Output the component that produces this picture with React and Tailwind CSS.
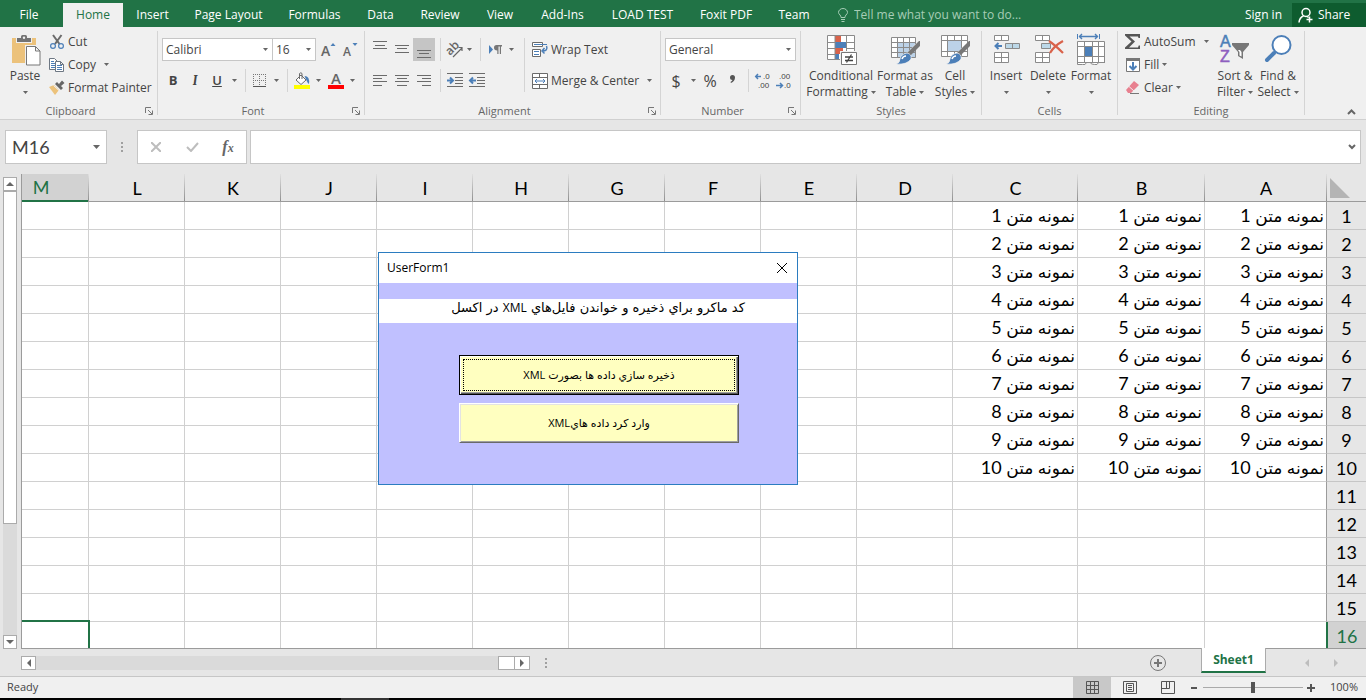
import React, { useState } from 'react'
import clsx from 'clsx'

const tabs = [
  { name: 'File', width: 'w-[58px] mr-[5px]' },
  { name: 'Home', width: 'w-[60px]' },
  { name: 'Insert', width: 'w-[59px]' },
  { name: 'Page Layout', width: 'w-[93px]' },
  { name: 'Formulas', width: 'w-[79px]' },
  { name: 'Data', width: 'w-[53px]' },
  { name: 'Review', width: 'w-[66px]' },
  { name: 'View', width: 'w-[54px]' },
  { name: 'Add-Ins', width: 'w-[71px]' },
  { name: 'LOAD TEST', width: 'w-[89px]' },
  { name: 'Foxit PDF', width: 'w-[78px]' },
  { name: 'Team', width: 'w-[58px]' }
]

const columns = [
  { name: 'A', width: 'w-[122px]' },
  { name: 'B', width: 'w-[127px]' },
  { name: 'C', width: 'w-[125px]' },
  ...['D', 'E', 'F', 'G', 'H', 'I', 'J', 'K', 'L', 'M'].map((name) => ({ name, width: 'w-[96px]' }))
]

const rows = Array.from({ length: 16 }, (_, i) => i + 1)

const Caret = ({ className }) => (
  <svg viewBox="0 0 5 3" className={clsx('h-[3px] w-[5px] shrink-0 fill-[#666]', className)} aria-hidden="true">
    <path d="M0 0h5L2.500 3z" />
  </svg>
)

const CaretButton = ({ label }) => (
  <button type="button" aria-label={label} className="flex h-full w-3 shrink-0 items-center justify-center">
    <Caret />
  </button>
)

const Divider = () => <div className="mr-[6px] ml-[5px] h-full w-px shrink-0 bg-[#d4d4d4]" />

const IconButton = ({ label, active, className, children }) => (
  <button
    type="button"
    aria-label={label}
    className={clsx('flex h-full shrink-0 items-center justify-center', active && 'bg-[#c5c5c5]', className || 'w-[22px]')}
  >
    {children}
  </button>
)

const SmallButton = ({ icon, label, caret, wide }) => (
  <button type="button" className="flex h-[23px] items-center whitespace-nowrap">
    {icon}
    <span className="ml-[3px]">{label}</span>
    {caret && <Caret className={wide ? 'ml-2' : 'ml-[3px]'} />}
  </button>
)

const BigButton = ({ icon, first, second, className }) => (
  <button type="button" className={clsx('flex shrink-0 flex-col items-center pt-2 leading-4 whitespace-nowrap', className)}>
    {icon}
    <span className="mt-px">{first}</span>
    <span className="flex h-4 items-center gap-[3px]">
      {second}
      <Caret />
    </span>
  </button>
)

const Combo = ({ label, value, className }) => (
  <div className={clsx('relative h-full shrink-0', className)}>
    <select
      aria-label={label}
      defaultValue={value}
      className="h-full w-full appearance-none border border-[#c6c6c6] bg-white pl-[3px] text-[#444] outline-none"
    >
      <option>{value}</option>
    </select>
    <Caret className="pointer-events-none absolute top-[10px] right-[5px]" />
  </div>
)

const Group = ({ title, launcher, className, children }) => (
  <section className={clsx('flex shrink-0 flex-col', className)}>
    <div className="flex h-[76px]">{children}</div>
    <div className="flex h-4 items-center text-[11px] text-[#666]">
      <span className="flex-1 text-center">{title}</span>
      {launcher && (
        <button type="button" aria-label={`${title} settings`} className="flex w-4 items-center justify-center">
          <svg viewBox="0 0 8 8" className="h-2 w-2 fill-none stroke-[#777]">
            <path d="M.5 6V.5H6M3 3l4 4M7.500 3.500v4h-4" />
          </svg>
        </button>
      )}
    </div>
  </section>
)

const GroupLine = () => <div className="my-1 w-px shrink-0 bg-[#d4d4d4]" />

/* Icons */

const Icon = ({ size = 'h-4 w-4', box = '0 0 16 16', children }) => (
  <svg viewBox={box} className={clsx('shrink-0 overflow-visible fill-none', size)} aria-hidden="true">
    {children}
  </svg>
)

const PasteIcon = () => (
  <Icon size="h-8 w-8" box="-1 0 32 32">
    <path fill="#ecc27b" d="M2 3h24v25H2z" />
    <path fill="#f0f0f0" d="M6 2h16v6H6z" />
    <path fill="#737373" d="M7 3h4V1.500Q11 0 12.500 0h3Q17 0 17 1.500V3h4v4H7z" />
    <circle cx="14" cy="2.800" r="1.200" fill="#f0f0f0" />
    <path fill="#fff" stroke="#f0f0f0" strokeWidth="3" d="M16.500 11.500h9l4.500 4.500v14H16.500z" />
    <path fill="#fff" stroke="#777" d="M16.500 11.500h9l4.500 4.500v14H16.500zM25.500 11.500V16H30" />
  </Icon>
)

const CutIcon = () => (
  <Icon>
    <path stroke="#6b6b6b" strokeWidth="2" d="M4 1l6.500 9M12.500 1L6 10" />
    <circle cx="4" cy="12" r="2.400" stroke="#4c7fb8" strokeWidth="1.200" />
    <circle cx="12" cy="12" r="2.400" stroke="#4c7fb8" strokeWidth="1.200" />
  </Icon>
)

const CopyIcon = () => (
  <Icon>
    <path fill="#fff" stroke="#6d7783" d="M.5 1.500h5l3 3v8h-8z" />
    <path stroke="#4c7fb8" d="M2 4.500h3M2 6.500h4M2 8.500h4M2 10.500h4" />
    <path fill="#fff" stroke="#6d7783" d="M6.500 4.500h5l3 3v7h-8zM11.500 4.500v3h3" />
    <path stroke="#4c7fb8" d="M8 8.500h5M8 10.500h5M8 12.500h5" />
  </Icon>
)

const PainterIcon = () => (
  <Icon>
    <path fill="#ecc27b" d="M0 7l5-2 5 5-4 5z" />
    <path stroke="#f0f0f0" d="M4.500 5.500l5.500 5" />
    <path fill="#666" d="M6 4l2-2 6 6-2 2zM10 4l3-3.500 2.500 2.500L12 6z" />
  </Icon>
)

const FontSizeIcon = ({ grow }) => (
  <Icon>
    <text x="0" y="14" fontSize={grow ? 14 : 12} fontFamily="Open Sans, sans-serif" fontWeight="600" fill="#666">A</text>
    <path fill="#4c7fb8" d={grow ? 'M9.500 4L12 1l2.500 3z' : 'M9.500 1h5L12 4z'} />
  </Icon>
)

const BordersIcon = () => (
  <Icon>
    <path stroke="#777" strokeDasharray="1 1" d="M1 1.500h13M1 7.500h13M1.500 1v12M7.500 1v12M13.500 1v12" />
    <path stroke="#555" d="M1 13.500h13" />
  </Icon>
)

const FillIcon = () => (
  <Icon>
    <path fill="#fff" stroke="#6b6b6b" d="M2 7l5-5 5 5-5 4.500z" />
    <path stroke="#6b6b6b" d="M5.500 6V.5Q7-1 8 .5V6" />
    <path fill="#4c7fb8" d="M10.500 3q5.500 0 4.500 8-1.500-1-2.500-3.500z" />
    <path fill="#ffff00" d="M0 12h16v4H0z" />
  </Icon>
)

const FontColorIcon = () => (
  <Icon>
    <text x="3" y="11" fontSize="15" fontFamily="Open Sans, sans-serif" fontWeight="600" fill="#666">A</text>
    <path fill="#ff0000" d="M0 12h16v4H0z" />
  </Icon>
)

const LinesIcon = ({ d }) => (
  <Icon>
    <path stroke="#6b6b6b" d={d} />
  </Icon>
)

const OrientationIcon = () => (
  <Icon>
    <text x="0" y="11" fontSize="12" fontFamily="Open Sans, sans-serif" fontWeight="600" fill="#666" transform="rotate(-45 5 9)">ab</text>
    <path stroke="#666" strokeWidth="1.200" d="M6 15l9-9M11.500 5.500H15V9" />
  </Icon>
)

const DirectionIcon = () => (
  <Icon>
    <path fill="#4c7fb8" d="M2 3l4 4.500L2 12z" />
    <path fill="#777" d="M15 3v1.500h-1V12h-1.200V4.500h-1.300V12h-1.200V8.500Q7 8.500 7 5.800T9.500 3z" />
  </Icon>
)

const IndentIcon = ({ arrow }) => (
  <Icon>
    <path stroke="#6b6b6b" d="M0 .5h16M8 4.500h8M8 7.500h8M8 10.500h8M0 13.500h16" />
    <path stroke="#4c7fb8" strokeWidth="2" d={arrow} />
  </Icon>
)

const WrapIcon = () => (
  <Icon>
    <path fill="#fff" stroke="#6b6b6b" d="M.5.5h10v4H.5zM.5 7.500h8v7h-8z" />
    <path stroke="#4c7fb8" d="M2 2.500h13M2 9.500h5M2 12.500h5" />
    <path stroke="#4c7fb8" strokeWidth="1.500" d="M14.500 4q2 5-4.500 5M12.500 6L10 9l2.500 2.500" />
  </Icon>
)

const MergeIcon = () => (
  <Icon>
    <path fill="#fff" stroke="#6b6b6b" d="M.5.5h15v15H.5zM.5 4.500h15M.5 11.500h15M7.500.5v4M7.500 11.500v4" />
    <path stroke="#4c7fb8" d="M3 8h10M5 6L3 8l2 2M11 6l2 2-2 2" />
  </Icon>
)

const DecimalIcon = ({ more }) => (
  <Icon>
    <g fontSize="8" fontFamily="Liberation Sans, sans-serif" fill="#444">
      <text x={more ? 8 : 3} y="6">{more ? '.0' : '.00'}</text>
      <text x={more ? 3 : 8} y="15">{more ? '.00' : '.0'}</text>
    </g>
    <path stroke="#4c7fb8" strokeWidth="1.500" d={more ? 'M6 3.500H1M3 1L.7 3.500 3 6' : 'M0 12.500h6M4 10l2.500 2.500L4 15'} />
  </Icon>
)

const ConditionalIcon = () => (
  <Icon size="h-8 w-8" box="0 0 32 32">
    <path fill="#fff" d="M2.500.5h27v24h-27z" />
    <path fill="#d9624a" d="M10 0h6v7h-6zM10 13h8v6h-8z" />
    <path fill="#4c7fb8" d="M10 7h11v6H10zM10 19h4v6h-4z" />
    <path stroke="#8a8a8a" d="M2.500.5h27v24h-27zM2 7.500h8M21 7.500h9M2 13.500h8M21 13.500h9M2 19.500h8M10 0v25M21.500 0v25" />
    <path fill="#fff" stroke="#f0f0f0" strokeWidth="3" d="M16.500 17.500h15v12h-15z" />
    <path fill="#fff" stroke="#777" d="M16.500 17.500h15v12h-15z" />
    <path stroke="#444" strokeWidth="1.300" d="M20 22h8M20 25.500h8M26.500 19.500l-5 8" />
  </Icon>
)

const BrushShape = () => (
  <>
    <path stroke="#f0f0f0" strokeWidth="4" d="M28 10L17 22" />
    <path fill="#777" d="M31 6v5L21 21l-3-3L30 6z" />
    <path fill="#4c7fb8" stroke="#f0f0f0" strokeWidth=".7" d="M18 18q5 1 4 6-4 6-15 5 4-1 4-5 1-5 7-6z" />
    <path stroke="#fff" strokeWidth="1.500" d="M13 24q1-3 4-3" />
  </>
)

const FormatTableIcon = () => (
  <Icon size="h-8 w-8" box="0 0 32 32">
    <path fill="#fff" d="M2.500 2.500h24v20h-24z" />
    <path fill="#bcd2e8" d="M9 8h18v15H9z" />
    <path stroke="#8a8a8a" d="M2.500 2.500h24v20h-24zM2 7.500h25M2 12.500h25M2 17.500h25M8.500 2v20M14.500 2v20M20.500 2v20" />
    <BrushShape />
  </Icon>
)

const CellStylesIcon = () => (
  <Icon size="h-8 w-8" box="0 0 32 32">
    <path fill="#fff" stroke="#8a8a8a" d="M2.500.5h26v21h-26zM2 5.500h27M2 16.500h27M8.500 0v22M22.500 0v22M15.500 0v5M15.500 17v5" />
    <path fill="#bcd2e8" d="M9 6h13v10H9z" />
    <BrushShape />
  </Icon>
)

const InsertIcon = () => (
  <Icon size="h-8 w-8" box="0 0 32 32">
    <path fill="#fff" stroke="#8a8a8a" d="M4.500.5h14v5h-14zM11.500.5v5M4.500 17.500h14v10h-14zM4.500 22.500h14M11.500 17.500v10" />
    <path fill="#bcd8e8" stroke="#8a8a8a" d="M15.500 8.500h14v5h-14zM22.500 8.500v5" />
    <path stroke="#4c7fb8" strokeWidth="2" d="M12 11H6M8.500 8L5.500 11l3 3" />
  </Icon>
)

const DeleteIcon = () => (
  <Icon size="h-8 w-8" box="0 0 32 32">
    <path fill="#fff" stroke="#8a8a8a" d="M3.500.5h14v5h-14zM10.500.5v5M3.500 17.500h14v10h-14zM3.500 22.500h14M10.500 17.500v10" />
    <path fill="#bcd8e8" stroke="#8a8a8a" d="M9.500 8.500h9v5h-9z" />
    <path stroke="#d9624a" strokeWidth="2.200" d="M17 6q6 4 14 12M31 6q-9 5-13 12" />
  </Icon>
)

const FormatIcon = () => (
  <Icon size="h-8 w-8" box="0 0 32 32">
    <path stroke="#4c7fb8" d="M2.500-1v5M24.500-1v5" />
    <path stroke="#4c7fb8" strokeWidth="1.400" d="M4 1.500h19M7-1L4.500 1.500 7 4M20-1l2.500 2.500L20 4" />
    <path fill="#fff" stroke="#8a8a8a" d="M2.500 6.500h27v21h-6q-1 3-4 2-4 0-4-2h-4q-1 3-4 2h-5zM2 11.500h28M2 21.500h28M9.500 6v22M17.500 6v22M23.500 6v22M2 27.500h28" />
    <path fill="#4c7fb8" d="M10 12h7v9h-7z" />
  </Icon>
)

const SumIcon = () => (
  <Icon>
    <path fill="#555" d="M0 0h15v4h-1.500L13 2.500H4.500L10 7.500l-6 6h9l.7-2H15V15H0v-1.500L6.500 7.500 0 1.500z" />
  </Icon>
)

const FillDownIcon = () => (
  <Icon>
    <path fill="#fff" stroke="#777" d="M1.500 1.500h13v13h-13z" />
    <path fill="#777" d="M1 1h14v3H1z" />
    <path stroke="#4c7fb8" strokeWidth="2" d="M8 5v8M4.500 9L8 12.500 11.500 9" />
  </Icon>
)

const ClearIcon = () => (
  <Icon>
    <path fill="#e8808f" d="M9 1l5 4-8 8H3L1 10z" />
    <path stroke="#f0f0f0" d="M4 6.500l5 4.500" />
    <path stroke="#777" d="M5 13.500h9" />
  </Icon>
)

const SortIcon = () => (
  <Icon size="h-8 w-8" box="0 0 32 32">
    <g fontSize="16" fontFamily="Liberation Sans, sans-serif" strokeWidth=".5">
      <text x="1" y="12" fill="#4c7fb8" stroke="#4c7fb8">A</text>
      <text x="1" y="27" fill="#8e5fbf" stroke="#8e5fbf">Z</text>
    </g>
    <path fill="#777" d="M13 8h17v2l-6 7v7l-5-3v-4l-6-7z" />
    <path fill="#fff" d="M20.500 17l-1.500-2h2l1.500 2v4.500l-2-1z" />
  </Icon>
)

const FindIcon = () => (
  <Icon size="h-8 w-8" box="0 0 32 32">
    <path stroke="#4c7fb8" strokeWidth="4" strokeLinecap="round" d="M5 25l7-7" />
    <circle cx="19.500" cy="10" r="9" fill="#fff" stroke="#4c7fb8" strokeWidth="2" />
  </Icon>
)

const Arrow = ({ d, className }) => (
  <svg viewBox="0 0 8 8" className={clsx('h-2 w-2', className || 'fill-[#666]')} aria-hidden="true">
    <path d={d} />
  </svg>
)

const Grip = () => (
  <svg viewBox="0 0 2 10" className="h-[10px] w-[2px] shrink-0 fill-[#a0a0a0]" aria-hidden="true">
    <path d="M0 0h2v2H0zM0 4h2v2H0zM0 8h2v2H0z" />
  </svg>
)

const TitleTabs = () => (
  <header className="flex h-[27px] shrink-0 items-end bg-[#217346] text-white">
    <nav className="flex h-6">
      {tabs.map((tab) => (
        <button
          key={tab.name}
          type="button"
          className={clsx('shrink-0 text-center whitespace-nowrap', tab.width, tab.name === 'Home' && 'bg-[#f0f0f0] text-[#217346]')}
        >
          {tab.name}
        </button>
      ))}
    </nav>
    <label className="ml-[15px] flex h-6 flex-1 items-center gap-[6px] text-[#a7cdb6]">
      <svg viewBox="0 0 10 14" className="h-[14px] w-[10px] fill-none stroke-[#a7cdb6]" aria-hidden="true">
        <path d="M3 9.500Q3 8 2 7 .5 5.500 .5 4.500a4.500 4 0 0 1 9 0Q9.500 5.500 8 7 7 8 7 9.500zM3 11.500h4M3.500 13.500h3" />
      </svg>
      <input
        type="text"
        aria-label="Tell me what you want to do"
        placeholder="Tell me what you want to do..."
        className="w-[200px] bg-transparent outline-none placeholder:text-[#a7cdb6]"
      />
    </label>
    <button type="button" className="mr-[10px] h-6">Sign in</button>
    <button type="button" className="flex h-6 w-[74px] items-center gap-1 bg-[#0e5c2f] pl-[6px]">
      <svg viewBox="0 0 16 16" className="h-4 w-4 fill-none stroke-white stroke-[1.5]" aria-hidden="true">
        <circle cx="8" cy="5.500" r="4" />
        <path d="M1 15.500q.5-5 4.500-6.500M9 9.500l1.500 1M11.500 9.500v6M8.500 12.500h6" />
      </svg>
      Share
    </button>
  </header>
)

const Ribbon = () => (
  <div className="flex h-[93px] shrink-0 overflow-hidden border-b border-[#d0d0d0] bg-[#f0f0f0] text-[#444]">
    <Group title="Clipboard" launcher className="w-[157px]">
      <BigButton icon={<PasteIcon />} first="Paste" className="ml-[5px] w-10" />
      <div className="ml-1 pt-[3px]">
        <SmallButton icon={<CutIcon />} label="Cut" />
        <SmallButton icon={<CopyIcon />} label="Copy" caret wide />
        <SmallButton icon={<PainterIcon />} label="Format Painter" />
      </div>
    </Group>
    <GroupLine />

    <Group title="Font" launcher className="w-[206px]">
      <div className="flex flex-col gap-2 pt-[11px] pl-1">
        <div className="flex h-[23px]">
          <Combo label="Font" value="Calibri" className="w-[111px]" />
          <Combo label="Font size" value="16" className="-ml-px mr-[2px] w-[44px]" />
          <IconButton label="Increase font size"><FontSizeIcon grow /></IconButton>
          <IconButton label="Decrease font size"><FontSizeIcon /></IconButton>
        </div>
        <div className="flex h-[23px] text-[13px]">
          <IconButton label="Bold"><b>B</b></IconButton>
          <IconButton label="Italic"><i className="font-serif font-bold">I</i></IconButton>
          <IconButton label="Underline"><u className="font-semibold">U</u></IconButton>
          <CaretButton label="Underline style" />
          <Divider />
          <IconButton label="Borders" className="mr-[2px] w-4"><BordersIcon /></IconButton>
          <CaretButton label="Border style" />
          <Divider />
          <IconButton label="Fill color" className="mr-[2px] w-4"><FillIcon /></IconButton>
          <CaretButton label="Choose fill color" />
          <IconButton label="Font color" className="mr-[2px] ml-1 w-4"><FontColorIcon /></IconButton>
          <CaretButton label="Choose font color" />
        </div>
      </div>
    </Group>
    <GroupLine />

    <Group title="Alignment" launcher className="w-[295px]">
      <div className="flex flex-col gap-2 pt-[11px] pl-1">
        <div className="flex h-[23px]">
          <IconButton label="Top align"><LinesIcon d="M1-.5h14M3 3.500h10M1 6.500h14" /></IconButton>
          <IconButton label="Middle align"><LinesIcon d="M1 3.500h14M3 6.500h10M1 10.500h14" /></IconButton>
          <IconButton label="Bottom align" active><LinesIcon d="M1 8.500h14M3 11.500h10M1 15.500h14" /></IconButton>
          <Divider />
          <IconButton label="Orientation" className="w-4"><OrientationIcon /></IconButton>
          <CaretButton label="Orientation options" />
          <Divider />
          <IconButton label="Text direction" className="mr-[2px] w-4"><DirectionIcon /></IconButton>
          <CaretButton label="Text direction options" />
        </div>
        <div className="flex h-[23px]">
          <IconButton label="Align left"><LinesIcon d="M1 2.500h14M1 5.500h9M1 8.500h14M1 12.500h9" /></IconButton>
          <IconButton label="Center"><LinesIcon d="M1 2.500h14M3 5.500h10M1 8.500h14M3 12.500h10" /></IconButton>
          <IconButton label="Align right"><LinesIcon d="M1 2.500h14M6 5.500h9M1 8.500h14M6 12.500h9" /></IconButton>
          <Divider />
          <IconButton label="Increase indent" className="mr-[6px] w-4"><IndentIcon arrow="M0 7.500h5M3 4.500l3 3-3 3" /></IconButton>
          <IconButton label="Decrease indent" className="w-4"><IndentIcon arrow="M7 7.500H2M4 4.500l-3 3 3 3" /></IconButton>
        </div>
      </div>
      <div className="mt-[11px] mr-px ml-[2px] h-[54px]"><Divider /></div>
      <div className="flex flex-col gap-2 pt-[11px]">
        <SmallButton icon={<WrapIcon />} label="Wrap Text" />
        <SmallButton icon={<MergeIcon />} label="Merge & Center" caret wide />
      </div>
    </Group>
    <GroupLine />

    <Group title="Number" launcher className="w-[139px]">
      <div className="flex flex-col gap-2 pt-[11px] pl-1">
        <div className="flex h-[23px]">
          <Combo label="Number format" value="General" className="w-[131px]" />
        </div>
        <div className="flex h-[23px] text-base">
          <IconButton label="Accounting format">$</IconButton>
          <CaretButton label="Currency" />
          <IconButton label="Percent style">%</IconButton>
          <IconButton label="Comma style">
            <svg viewBox="0 0 5 8" className="mb-1 h-2 w-[5px] fill-[#555]"><path d="M0 2.500a2.500 2.500 0 0 1 5 0Q5 6 1 8L.5 7Q2 6 2.500 5A2.500 2.500 0 0 1 0 2.500z" /></svg>
          </IconButton>
          <Divider />
          <IconButton label="Increase decimal" className="mr-[5px] w-4"><DecimalIcon more /></IconButton>
          <IconButton label="Decrease decimal" className="w-4"><DecimalIcon /></IconButton>
        </div>
      </div>
    </Group>
    <GroupLine />

    <Group title="Styles" className="w-[180px]">
      <BigButton icon={<ConditionalIcon />} first="Conditional" second="Formatting" className="ml-[5px] w-[70px]" />
      <BigButton icon={<FormatTableIcon />} first="Format as" second="Table" className="w-[58px]" />
      <BigButton icon={<CellStylesIcon />} first="Cell" second="Styles" className="w-[42px]" />
    </Group>
    <GroupLine />

    <Group title="Cells" className="w-[135px]">
      <BigButton icon={<InsertIcon />} first="Insert" className="ml-[3px] w-[42px]" />
      <BigButton icon={<DeleteIcon />} first="Delete" className="w-[42px]" />
      <BigButton icon={<FormatIcon />} first="Format" className="w-[44px]" />
    </Group>
    <GroupLine />

    <Group title="Editing" className="w-[186px]">
      <div className="ml-[7px] w-[88px] pt-[3px]">
        <SmallButton icon={<SumIcon />} label="AutoSum" caret wide />
        <SmallButton icon={<FillDownIcon />} label="Fill" caret />
        <SmallButton icon={<ClearIcon />} label="Clear" caret />
      </div>
      <BigButton icon={<SortIcon />} first="Sort &" second="Filter" className="w-[44px]" />
      <BigButton icon={<FindIcon />} first="Find &" second="Select" className="w-[42px]" />
    </Group>
    <GroupLine />

    <div className="flex flex-1 items-end justify-end pr-[10px] pb-1">
      <button type="button" aria-label="Collapse the ribbon">
        <svg viewBox="0 0 9 6" className="h-[6px] w-[9px] fill-none stroke-[#666] stroke-2"><path d="M1 5l3.500-3.500L8 5" /></svg>
      </button>
    </div>
  </div>
)

const FormulaBar = () => (
  <div className="flex h-[54px] shrink-0 items-start bg-[#e6e6e6] px-[5px] pt-[10px]">
    <div className="flex h-[34px] w-[102px] items-center border border-[#c6c6c6] bg-white pr-[6px]">
      <input
        type="text"
        aria-label="Name box"
        defaultValue="M16"
        className="w-full min-w-0 flex-1 bg-transparent pl-[6px] font-[Lato,sans-serif] text-lg text-[#444] outline-none"
      />
      <button type="button" aria-label="Name box list">
        <svg viewBox="0 0 7 4" className="h-1 w-[7px] fill-[#666]"><path d="M0 0h7L3.500 4z" /></svg>
      </button>
    </div>
    <div className="mx-[14px] flex h-[34px] items-center"><Grip /></div>
    <div className="flex h-[34px] w-[110px] items-center border border-[#c6c6c6] bg-white text-[#666]">
      <IconButton label="Cancel" className="w-9">
        <svg viewBox="0 0 10 10" className="h-[10px] w-[10px] stroke-[#bdbdbd] stroke-2"><path d="M0 0l10 10M10 0L0 10" /></svg>
      </IconButton>
      <IconButton label="Enter" className="w-9">
        <svg viewBox="0 0 13 10" className="h-[10px] w-[13px] fill-none stroke-[#bdbdbd] stroke-2"><path d="M1 5l4 4 7-8" /></svg>
      </IconButton>
      <IconButton label="Insert function" className="w-9">
        <span className="font-[Liberation_Serif,serif] text-base leading-4 font-bold italic">f<span className="text-xs">x</span></span>
      </IconButton>
    </div>
    <div className="ml-[3px] flex h-[34px] flex-1 items-center border border-[#c6c6c6] bg-white pr-1">
      <input type="text" aria-label="Formula" className="w-full min-w-0 flex-1 bg-transparent px-2 outline-none" />
      <button type="button" aria-label="Expand formula bar">
        <svg viewBox="0 0 8 6" className="h-[6px] w-2 fill-none stroke-[#666] stroke-2"><path d="M1 1l3 3 3-3" /></svg>
      </button>
    </div>
  </div>
)

const headerLine = 'bg-[linear-gradient(to_bottom,#e0e0e0,#8f8f8f)] bg-[length:1px_100%] bg-left bg-no-repeat'

const Sheet = () => (
  <div dir="rtl" className="min-h-0 flex-1 overflow-hidden border-b border-l border-[#9b9b9b] bg-white">
    <table className="w-[1374px] table-fixed border-separate border-spacing-0 font-[Lato,'DejaVu_Sans',sans-serif] text-lg leading-6 text-black">
      <thead>
        <tr className="h-7 bg-[#e6e6e6]">
          <th aria-label="Select all" className={clsx('w-10 border-b border-[#9b9b9b] p-0', headerLine)}>
            <svg viewBox="0 0 20 20" className="mr-4 h-5 w-5 fill-[#b4b4b4]"><path d="M0 0v20h20z" /></svg>
          </th>
          {columns.map((col) => (
            <th
              key={col.name}
              scope="col"
              className={clsx(
                'py-0 pr-0 pl-[2px] font-normal',
                col.width,
                col.name === 'M' ? 'border-b-2 border-[#217346] bg-[#d2d2d2] text-[#217346]' : 'border-b border-[#9b9b9b]',
                headerLine
              )}
            >
              {col.name}
            </th>
          ))}
        </tr>
      </thead>
      <tbody>
        {rows.map((row) => (
          <tr key={row} className="h-7">
            <th
              scope="row"
              className={clsx(
                'border-b border-b-[#c6c6c6] p-0 font-normal',
                row === 16 ? 'border-l-2 border-l-[#217346] bg-[#d2d2d2] text-[#217346]' : 'border-l border-l-[#9b9b9b] bg-[#e6e6e6]'
              )}
            >
              {row}
            </th>
            {columns.map((col, i) => (
              <td key={col.name} className="relative border-b border-l border-[#d0d0d0] py-0 pr-[2px] pl-0 text-right whitespace-nowrap">
                {i < 3 && row <= 10 && (
                  <><span className="text-[17px]">نمونه متن</span> {row}</>
                )}
                {col.name === 'M' && row === 16 && <span className="absolute -inset-[2px] border-2 border-[#217346]" />}
              </td>
            ))}
          </tr>
        ))}
      </tbody>
    </table>
  </div>
)

const VerticalScroll = () => (
  <div className="flex w-[21px] shrink-0 flex-col items-center bg-[#e6e6e6] pt-[3px] pr-px">
    <button type="button" aria-label="Scroll up" className="flex h-[14px] w-[14px] items-center justify-center border border-[#ababab] bg-white">
      <Arrow d="M0 6l4-4 4 4z" />
    </button>
    <div className="w-[14px] flex-1 bg-[#dadada]">
      <div className="h-3/4 border border-[#ababab] bg-white" />
    </div>
    <button type="button" aria-label="Scroll down" className="flex h-[14px] w-[14px] items-center justify-center border border-[#ababab] bg-white">
      <Arrow d="M0 2h8L4 6z" />
    </button>
  </div>
)

const SheetBar = () => (
  <div className="flex h-[27px] shrink-0 items-center bg-[#e6e6e6] pl-[21px]">
    <div className="flex h-[14px] w-[509px] bg-[#dadada]">
      <button type="button" aria-label="Scroll left" className="flex w-[15px] items-center justify-center border border-[#ababab] bg-white">
        <Arrow d="M6 0v8L2 4z" />
      </button>
      <div className="flex-1" />
      <div className="w-[17px] border border-[#ababab] bg-white" />
      <button type="button" aria-label="Scroll right" className="-ml-px flex w-4 items-center justify-center border border-[#ababab] bg-white">
        <Arrow d="M2 0v8l4-4z" />
      </button>
    </div>
    <div className="ml-[15px]"><Grip /></div>
    <div className="flex-1" />
    <button type="button" aria-label="New sheet" className="mr-[35px]">
      <svg viewBox="0 0 16 16" className="h-4 w-4 fill-none stroke-[#777]">
        <circle cx="8" cy="8" r="7.500" />
        <path strokeWidth="2" d="M4 8h8M8 4v8" />
      </svg>
    </button>
    <button type="button" className="-mt-px h-[25px] w-[65px] self-start border-x border-b-2 border-x-[#ababab] border-b-[#217346] bg-white pt-px font-bold text-[#217346]">
      Sheet1
    </button>
    <div className="flex w-[100px] items-center justify-end gap-[21px] pr-[26px]">
      <Arrow className="fill-[#bdbdbd]" d="M6 0v8L2 4z" />
      <Arrow className="fill-[#bdbdbd]" d="M2 0v8l4-4z" />
    </div>
  </div>
)

const StatusBar = () => {
  const [zoom, setZoom] = useState(100)

  return (
    <footer className="flex h-[22px] shrink-0 items-center border-t border-[#c6c6c6] bg-[#f0f0f0] text-[11px] text-[#444]">
      <span className="flex-1 pl-[7px]">Ready</span>
      <IconButton label="Normal view" className="w-[38px] bg-[#c8c8c8]">
        <svg viewBox="0 0 13 13" className="h-[13px] w-[13px] fill-none stroke-[#555]"><path d="M.5.5h12v12H.5zM0 4.500h13M0 8.500h13M4.500 0v13M8.500 0v13" /></svg>
      </IconButton>
      <IconButton label="Page layout view" className="w-[38px]">
        <svg viewBox="0 0 14 13" className="h-[13px] w-[14px] fill-none stroke-[#555]"><path d="M.5.5h13v12H.5zM3.500 2.500h7v8h-7zM5 4.500h4M5 6.500h4M5 8.500h4" /></svg>
      </IconButton>
      <IconButton label="Page break preview" className="w-[38px]">
        <svg viewBox="0 0 14 13" className="h-[13px] w-[14px] fill-none stroke-[#555]"><path d="M.5.5h13v12H.5zM5.500 0v7.500M.5 7.500h8V0" /></svg>
      </IconButton>
      <button type="button" aria-label="Zoom out" className="mr-1 ml-1 flex h-3 w-2 items-center"><span className="h-[2px] w-[6px] bg-[#555]" /></button>
      <input
        type="range"
        aria-label="Zoom"
        min="0"
        max="200"
        value={zoom}
        onChange={(e) => setZoom(Number(e.target.value))}
        className="h-3 w-[100px] appearance-none bg-[linear-gradient(#aaa,#aaa)] bg-[length:100%_1px] bg-center bg-no-repeat [&::-webkit-slider-thumb]:h-[11px] [&::-webkit-slider-thumb]:w-1 [&::-webkit-slider-thumb]:appearance-none [&::-webkit-slider-thumb]:bg-[#555]"
      />
      <button type="button" aria-label="Zoom in" className="ml-1">
        <svg viewBox="0 0 8 8" className="h-2 w-2 fill-[#555]"><path d="M3 0h2v3h3v2H5v3H3V5H0V3h3z" /></svg>
      </button>
      <span className="w-[51px] pr-2 text-right">{zoom}%</span>
    </footer>
  )
}

const UserForm = ({ onClose }) => (
  <div
    role="dialog"
    aria-label="UserForm1"
    className="absolute top-[252px] left-[378px] w-[420px] border border-[#2b7cc0] bg-[#c0c0ff] text-black"
  >
    <div className="flex h-[30px] items-center justify-between bg-white pr-[9px] pl-2">
      <span>UserForm1</span>
      <button type="button" aria-label="Close" onClick={onClose}>
        <svg viewBox="0 0 12 12" className="h-3 w-3 stroke-black"><path d="M1 1l10 10M11 1L1 11" /></svg>
      </button>
    </div>
    <p dir="rtl" className="mt-4 h-6 bg-white pr-[50px] pl-[70px] text-center font-['DejaVu_Sans',sans-serif] text-[13px] leading-[18px] whitespace-nowrap">
      كد ماكرو براي ذخيره و خواندن فايل‌هاي <span className="font-['Open_Sans',sans-serif] text-xs">XML</span> در اكسل
    </p>
    <div className="mt-8 mb-[41px] ml-20 flex w-[280px] flex-col gap-2 font-['Open_Sans','DejaVu_Sans',sans-serif] text-[11px]">
      <button type="button" dir="rtl" className="h-10 border border-black bg-[#ffffc0] p-[3px] shadow-[inset_1px_1px_0_#fff,inset_-1px_-1px_0_#555,inset_-2px_-2px_0_#a0a0a0]">
        <span className="flex h-full items-center justify-center border border-dotted border-black">ذخيره سازي داده ها بصورت XML</span>
      </button>
      <button type="button" dir="rtl" className="h-10 border border-t-white border-r-[#696969] border-b-[#696969] border-l-white bg-[#ffffc0] shadow-[inset_1px_1px_0_#e3e3e3,inset_-1px_-1px_0_#a0a0a0]">
        وارد كرد داده هايXML
      </button>
    </div>
  </div>
)

const App = () => {
  const [showForm, setShowForm] = useState(true)

  return (
    <div className="relative flex h-screen min-h-[480px] flex-col overflow-hidden bg-[#e6e6e6] font-['Open_Sans','DejaVu_Sans',sans-serif] text-xs">
      <TitleTabs />
      <Ribbon />
      <FormulaBar />
      <div className="flex min-h-0 flex-1">
        <VerticalScroll />
        <Sheet />
      </div>
      <SheetBar />
      <StatusBar />
      <div className="h-[2px] shrink-0 bg-black">
        <div className="ml-[341px] h-full w-12 bg-[#333]" />
      </div>
      {showForm && <UserForm onClose={() => setShowForm(false)} />}
    </div>
  )
}

export default App
